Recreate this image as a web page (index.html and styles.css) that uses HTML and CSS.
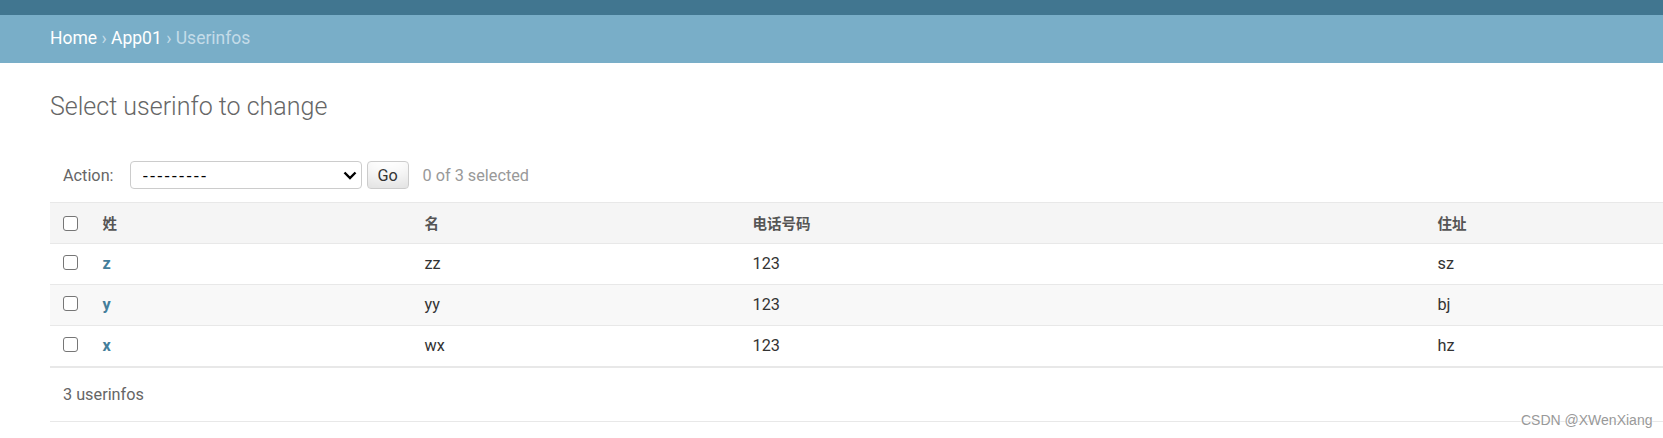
FILE: index.html
```html
<!DOCTYPE html>
<html lang="zh-CN">
<head>
<meta charset="utf-8">
<title>Select userinfo to change</title>
<link rel="stylesheet" href="styles.css">
</head>
<body>
<div class="header"></div>
<div class="breadcrumbs"><a href="#">Home</a> <span class="sep">›</span> <a href="#">App01</a> <span class="sep">›</span> <span class="current">Userinfos</span></div>
<div class="content">
  <h1>Select userinfo to change</h1>
  <form class="changelist">
    <div class="actions">
      <label>Action:</label>
      <select class="action-select"><option>---------</option></select>
      <button type="button" class="go">Go</button>
      <span class="counter">0 of 3 selected</span>
    </div>
    <table class="results">
      <colgroup>
        <col class="c1"><col class="c2"><col class="c3"><col class="c4"><col class="c5">
      </colgroup>
      <thead>
        <tr><th class="cb"><span class="box"></span></th><th>姓</th><th>名</th><th>电话号码</th><th>住址</th></tr>
      </thead>
      <tbody>
        <tr><td class="cb"><span class="box"></span></td><th class="link"><a href="#">z</a></th><td>zz</td><td>123</td><td>sz</td></tr>
        <tr class="even"><td class="cb"><span class="box"></span></td><th class="link"><a href="#">y</a></th><td>yy</td><td>123</td><td>bj</td></tr>
        <tr><td class="cb"><span class="box"></span></td><th class="link"><a href="#">x</a></th><td>wx</td><td>123</td><td>hz</td></tr>
      </tbody>
    </table>
    <p class="paginator">3 userinfos</p>
  </form>
</div>
<div class="watermark">CSDN @XWenXiang</div>
</body>
</html>
```
FILE: styles.css
```css
html, body {
  margin: 0;
  padding: 0;
}
body {
  font-family: Roboto, "Noto Sans CJK SC", sans-serif;
  color: #333;
  background: #fff;
  overflow: hidden;
  width: 1663px;
  height: 438px;
  position: relative;
}
.header {
  height: 15px;
  background: #417690;
}
.breadcrumbs {
  height: 48px;
  line-height: 46px;
  padding: 0 50px;
  background: #79aec8;
  color: #c4dce8;
  font-size: 17.5px;
}
.breadcrumbs a {
  color: #fff;
  text-decoration: none;
}
.content {
  padding: 0 0 0 50px;
}
h1 {
  margin: 28.5px 0 0;
  font-size: 25px;
  line-height: 30px;
  font-weight: 300;
  color: #666;
}
.changelist {
  margin: 26.5px 0 0;
}
.actions {
  height: 30px;
  padding: 12px 13px;
  display: flex;
  align-items: center;
  color: #666;
  font-size: 16.25px;
}
.actions label {
  margin-right: 16px;
}
.action-select {
  -webkit-appearance: none;
  appearance: none;
  width: 232px;
  height: 28px;
  box-sizing: border-box;
  border: 1px solid #ccc;
  border-radius: 4px;
  padding: 0 0 0 12px;
  margin: 0;
  font-family: "Liberation Sans", sans-serif;
  font-size: 17px;
  letter-spacing: 1.6px;
  color: #000;
  background: #fff url("data:image/svg+xml,%3Csvg xmlns='http://www.w3.org/2000/svg' width='14' height='9' viewBox='0 0 14 9'%3E%3Cpath d='M1.5 1.5 L7 7 L12.5 1.5' fill='none' stroke='%23000' stroke-width='2.4'/%3E%3C/svg%3E") no-repeat right 4px center;
}
.go {
  margin: 0 0 0 5px;
  height: 28px;
  width: 42px;
  box-sizing: border-box;
  border: 1px solid #ccc;
  border-radius: 4px;
  background: #fff;
  box-shadow: 0 -18px 25px -12px rgba(0, 0, 0, 0.15) inset;
  font-family: Roboto, sans-serif;
  font-size: 16.25px;
  color: #333;
  padding: 0;
}
.counter {
  margin-left: 14px;
  color: #999;
}
.results {
  width: 1613px;
  table-layout: fixed;
  border-collapse: separate;
  border-spacing: 0;
}
.c1 { width: 40px; }
.c2 { width: 322px; }
.c3 { width: 328px; }
.c4 { width: 685px; }
.c5 { width: 238px; }
thead th {
  background: #f5f5f5;
  border-top: 1px solid #e8e8e8;
  border-bottom: 1px solid #e8e8e8;
  line-height: 40px;
  padding: 0 12.5px;
  text-align: left;
  font-family: "Noto Sans CJK SC", sans-serif;
  font-size: 14.5px;
  font-weight: 600;
  color: #555;
  white-space: nowrap;
}
tbody td, tbody th {
  border-bottom: 1px solid #e8e8e8;
  line-height: 40px;
  padding: 0 12.5px;
  text-align: left;
  font-size: 16.25px;
  font-weight: 400;
  color: #333;
}
tbody tr.even td, tbody tr.even th {
  background: #f8f8f8;
}
tbody th.link a {
  color: #447e9b;
  font-weight: 700;
  text-decoration: none;
}
.cb {
  padding: 0 0 0 13px !important;
}
.box {
  display: inline-block;
  width: 13px;
  height: 13px;
  border: 1px solid #767676;
  border-radius: 3px;
  background: #fff;
  vertical-align: middle;
  position: relative;
  top: -2px;
}
.paginator {
  margin: 0;
  border-top: 1.5px solid #e8e8e8;
  border-bottom: 1px solid #e8e8e8;
  padding: 12.5px 13px;
  line-height: 27.5px;
  font-size: 16.25px;
  color: #666;
}
.watermark {
  position: absolute;
  left: 1521px;
  top: 412px;
  font-family: "Liberation Sans", sans-serif;
  font-size: 14px;
  color: #999;
  text-shadow: 0 0 2px #fff, 0 0 2px #fff;
}
```
